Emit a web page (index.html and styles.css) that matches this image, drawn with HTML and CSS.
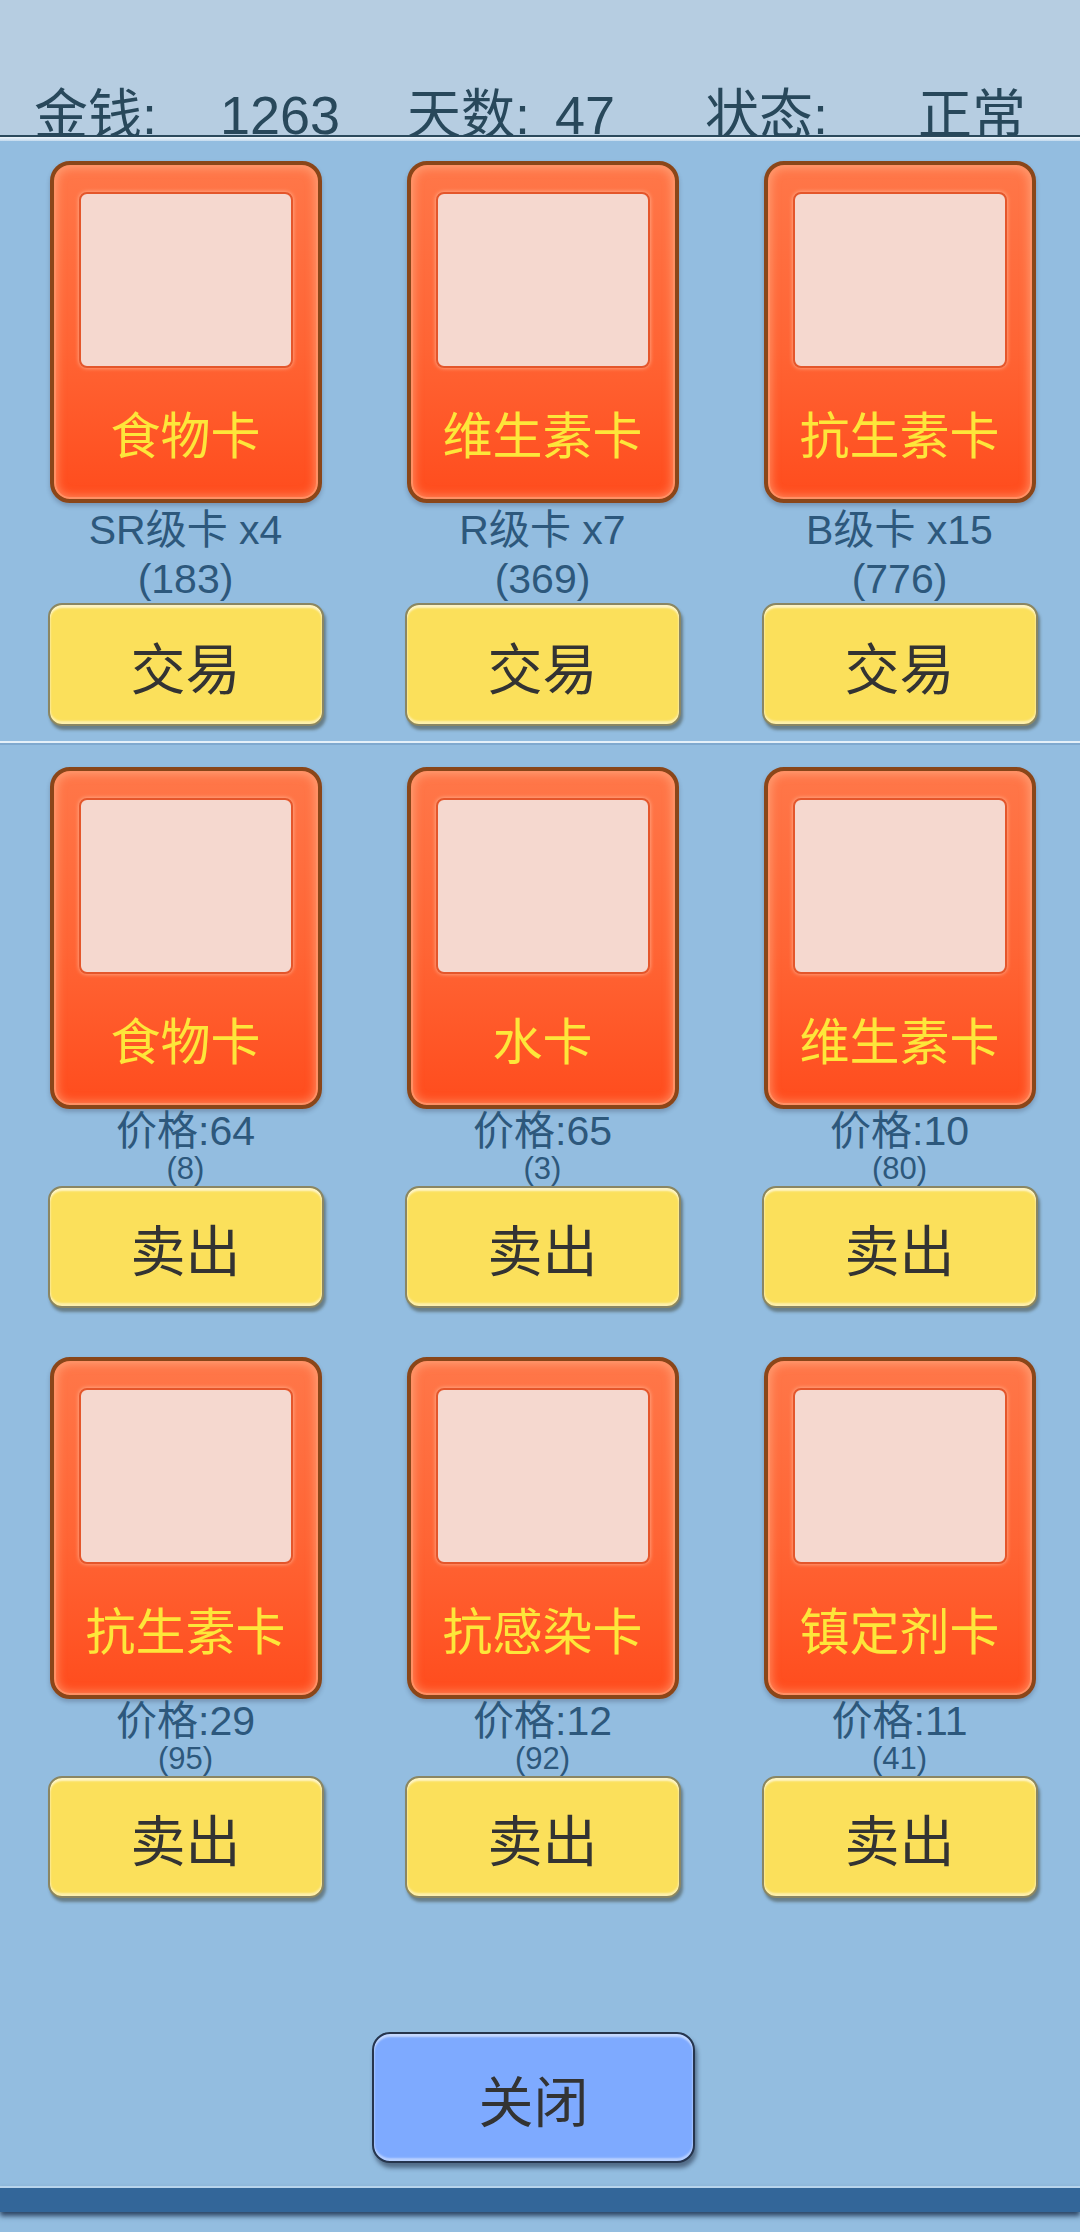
FILE: index.html
```html
<!DOCTYPE html>
<html lang="zh-CN">

<head>
  <meta charset="UTF-8">
  <meta name="viewport" content="width=device-width, initial-scale=1.0">
  <title>卡牌交易</title>
  <link rel="stylesheet" href="styles.css">
</head>

<body>
  <div class="page">
    <!-- 顶部状态栏 -->
    <div class="top-bar">
      <span>金钱:</span>
      <span>1263</span>
      <span>天数:</span>
      <span>47</span>
      <span>状态:</span>
      <span>正常</span>
    </div>
    <div class="top-shine"></div>

    <!-- 手上的卡 -->
    <div class="deck">
      <div class="slot">
        <div class="card">
          <div class="card-pic"></div>
          <div class="card-name">食物卡</div>
        </div>
        <div class="card-info">SR级卡 x4<br>(183)</div>
        <a href="#" class="btn">交易</a>
      </div>
      <div class="slot">
        <div class="card">
          <div class="card-pic"></div>
          <div class="card-name">维生素卡</div>
        </div>
        <div class="card-info">R级卡 x7<br>(369)</div>
        <a href="#" class="btn">交易</a>
      </div>
      <div class="slot">
        <div class="card">
          <div class="card-pic"></div>
          <div class="card-name">抗生素卡</div>
        </div>
        <div class="card-info">B级卡 x15<br>(776)</div>
        <a href="#" class="btn">交易</a>
      </div>
    </div>

    <div class="divider"></div>

    <!-- 市场 -->
    <div class="market">
      <div class="slot">
        <div class="card">
          <div class="card-pic"></div>
          <div class="card-name">食物卡</div>
        </div>
        <div class="price">价格:64</div>
        <div class="count">(8)</div>
        <a href="#" class="btn btn-sell">卖出</a>
      </div>
      <div class="slot">
        <div class="card">
          <div class="card-pic"></div>
          <div class="card-name">水卡</div>
        </div>
        <div class="price">价格:65</div>
        <div class="count">(3)</div>
        <a href="#" class="btn btn-sell">卖出</a>
      </div>
      <div class="slot">
        <div class="card">
          <div class="card-pic"></div>
          <div class="card-name">维生素卡</div>
        </div>
        <div class="price">价格:10</div>
        <div class="count">(80)</div>
        <a href="#" class="btn btn-sell">卖出</a>
      </div>
      <div class="slot">
        <div class="card">
          <div class="card-pic"></div>
          <div class="card-name">抗生素卡</div>
        </div>
        <div class="price">价格:29</div>
        <div class="count">(95)</div>
        <a href="#" class="btn btn-sell">卖出</a>
      </div>
      <div class="slot">
        <div class="card">
          <div class="card-pic"></div>
          <div class="card-name">抗感染卡</div>
        </div>
        <div class="price">价格:12</div>
        <div class="count">(92)</div>
        <a href="#" class="btn btn-sell">卖出</a>
      </div>
      <div class="slot">
        <div class="card">
          <div class="card-pic"></div>
          <div class="card-name">镇定剂卡</div>
        </div>
        <div class="price">价格:11</div>
        <div class="count">(41)</div>
        <a href="#" class="btn btn-sell">卖出</a>
      </div>
    </div>

    <div class="close-row">
      <a href="#" class="close">关闭</a>
    </div>

    <div class="bottom-bar"></div>
  </div>
</body>

</html>
```

FILE: styles.css
```css
* {
  margin: 0;
  padding: 0;
}

a {
  text-decoration: none;
}

body {
  font-family: "Liberation Sans", "Noto Sans CJK SC", sans-serif;
}

.page {
  display: flex;
  flex-direction: column;
  width: 1080px;
  height: 2232px;
  overflow: hidden;
  background-color: #93bde0;
}

/* 顶部状态栏 */
.top-bar {
  display: grid;
  grid-template-columns: 186px 187px 148px 150px 213px auto;
  box-sizing: border-box;
  height: 137px;
  padding: 88px 0 0 34px;
  background-color: #b6cde1;
  border-bottom: 2px solid #2b4a5d;
  font-size: 54px;
  line-height: 54px;
  color: #28485b;
}

.top-shine {
  height: 4px;
  background: linear-gradient(#eef5fb, #c3daee);
}

/* 卡片网格 */
.deck,
.market {
  display: grid;
  grid-template-columns: repeat(3, 357px);
  justify-items: center;
  padding-left: 7px;
}

.deck {
  padding-top: 20px;
}

.market {
  padding-top: 22px;
  row-gap: 49px;
}

.slot {
  display: flex;
  flex-direction: column;
  align-items: center;
}

.card {
  display: flex;
  flex-direction: column;
  align-items: center;
  box-sizing: border-box;
  width: 272px;
  height: 342px;
  border: 4px solid #8a4619;
  border-radius: 20px;
  background: linear-gradient(#ff7749, #ff6434 55%, #ff4c1d);
  box-shadow: inset 0 0 0 2px #ff9064, inset 0 0 10px 3px rgba(255, 190, 150, 0.55), 0 3px 4px rgba(40, 40, 60, 0.25);
}

.card-pic {
  box-sizing: border-box;
  width: 214px;
  height: 176px;
  margin-top: 27px;
  background-color: #f5d8cf;
  border: 2px solid #e4562b;
  border-radius: 8px;
  box-shadow: 0 0 4px rgba(255, 190, 160, 0.9);
}

.card-name {
  margin-top: 36px;
  font-family: "Noto Sans CJK SC", sans-serif;
  font-size: 50px;
  line-height: 56px;
  color: #fde63a;
  white-space: nowrap;
}

.card-info {
  margin-top: 3px;
  font-size: 41px;
  line-height: 49px;
  color: #2d587c;
  text-align: center;
}

.price {
  font-size: 41px;
  line-height: 44px;
  color: #2d587c;
}

.count {
  font-size: 31px;
  line-height: 32px;
  color: #2d587c;
}

/* 按钮 */
.btn {
  display: flex;
  align-items: center;
  justify-content: center;
  box-sizing: border-box;
  width: 276px;
  height: 123px;
  margin-top: -1px;
  background-color: #fbe05b;
  border: 2px solid #8a8663;
  border-radius: 14px;
  box-shadow: inset 0 3px 2px rgba(255, 255, 255, 0.65), inset 0 -3px 2px rgba(255, 255, 255, 0.5), 2px 4px 3px rgba(50, 50, 30, 0.45);
  font-family: "Noto Sans CJK SC", sans-serif;
  font-size: 55px;
  color: #333;
}

.btn-sell {
  height: 122px;
  margin-top: 1px;
}

.divider {
  height: 2px;
  margin-top: 15px;
  background-color: #e4f0f9;
  border-bottom: 2px solid #7fa9cf;
}

/* 关闭 */
.close-row {
  padding: 134px 0 0 372px;
}

.close {
  display: flex;
  align-items: center;
  justify-content: center;
  box-sizing: border-box;
  width: 323px;
  height: 131px;
  background-color: #7eaaff;
  border: 2px solid #26354d;
  border-radius: 18px;
  box-shadow: inset 0 3px 2px rgba(255, 255, 255, 0.55), inset 0 -3px 2px rgba(255, 255, 255, 0.45), 2px 5px 4px rgba(20, 30, 50, 0.5);
  font-family: "Noto Sans CJK SC", sans-serif;
  font-size: 55px;
  color: #333;
}

.bottom-bar {
  height: 24px;
  margin-top: auto;
  margin-bottom: 20px;
  background-color: #336699;
  border-top: 2px solid #b8d4ec;
  box-shadow: 0 4px 5px rgba(20, 40, 70, 0.8);
}
```
